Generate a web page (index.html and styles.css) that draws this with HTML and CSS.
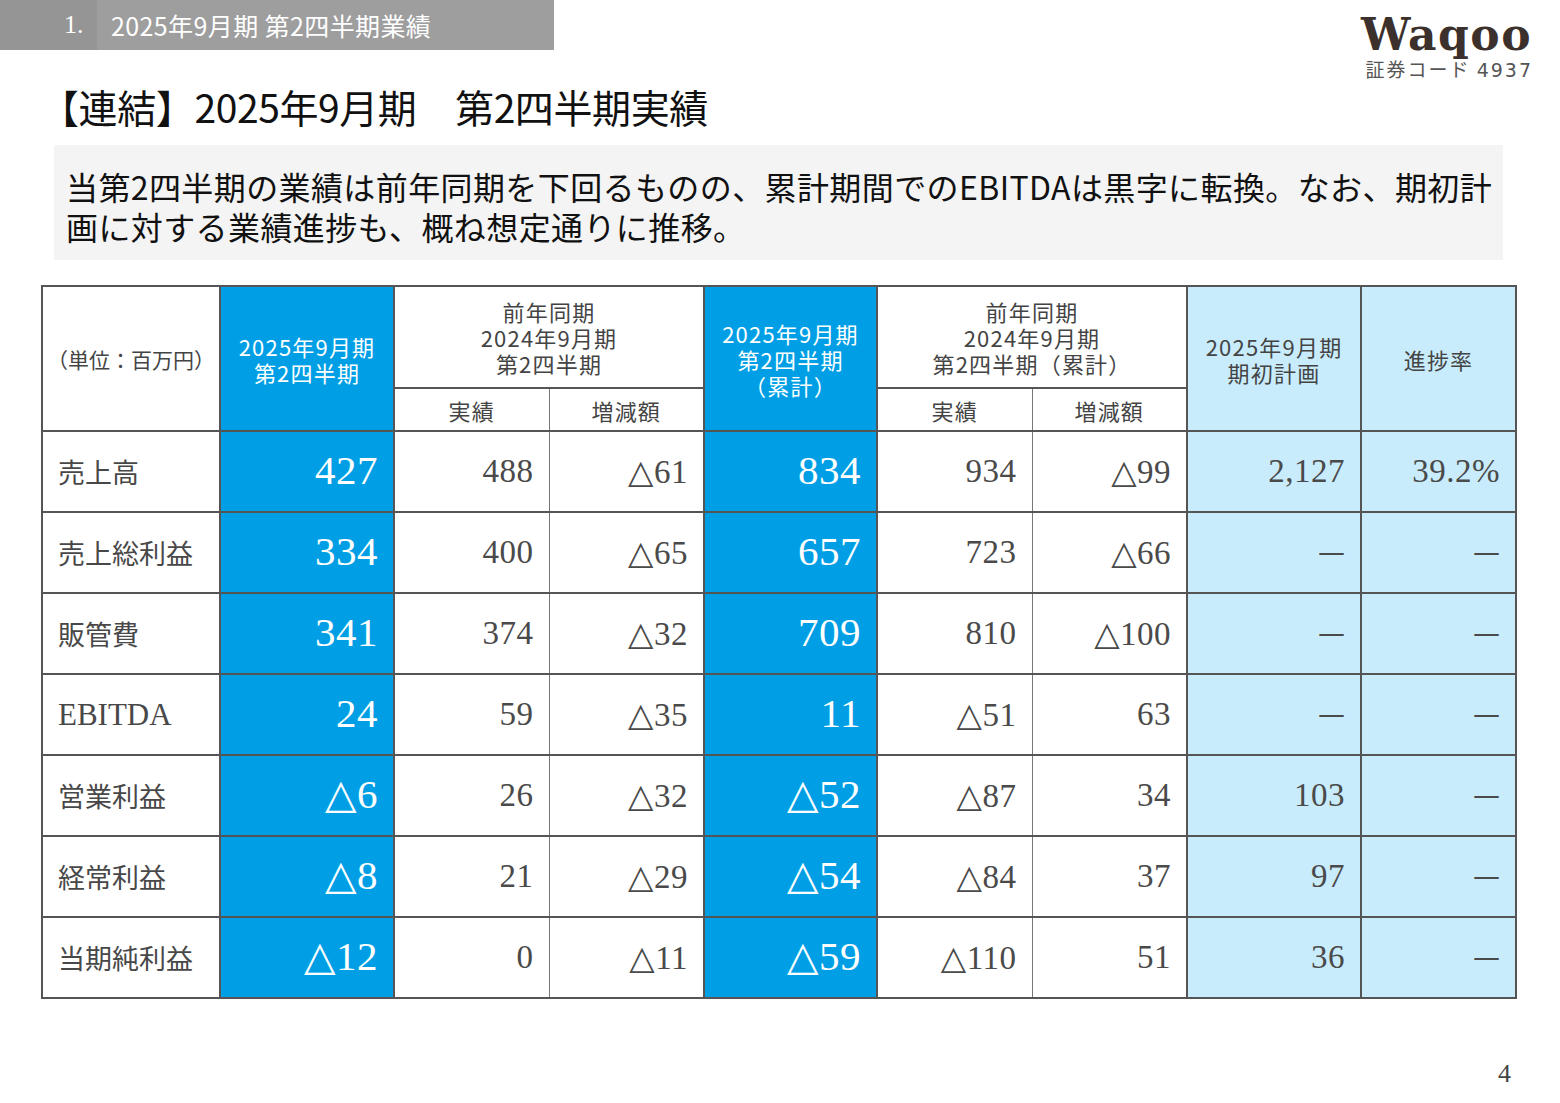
FILE: index.html
```html
<!DOCTYPE html>
<html lang="ja">
<head>
<meta charset="utf-8">
<title>【連結】2025年9月期 第2四半期実績</title>
<link rel="stylesheet" href="styles.css">
</head>
<body>
<div class="page">
  <header class="top">
    <div class="banner">
      <div class="banner-num">1.</div>
      <div class="banner-text">2025年9月期 第2四半期業績</div>
    </div>
    <div class="logo">
      <div class="logo-mark">Waqoo</div>
      <div class="logo-code">証券コード <span class="code-num">4937</span></div>
    </div>
  </header>
  <h1 class="title">【連結】2025年9月期　第2四半期実績</h1>
  <div class="summary">当第2四半期の業績は前年同期を下回るものの、累計期間でのEBITDAは黒字に転換。なお、期初計<br>画に対する業績進捗も、概ね想定通りに推移。</div>
  <table class="results">
    <colgroup>
      <col class="c-label"><col class="c-main"><col class="c-sub"><col class="c-sub"><col class="c-main2"><col class="c-sub"><col class="c-sub"><col class="c-main"><col class="c-sub">
    </colgroup>
    <thead>
      <tr class="h1">
        <th rowspan="2" class="unit">（単位：百万円）</th>
        <th rowspan="2" class="blue">2025年9月期<br>第2四半期</th>
        <th colspan="2">前年同期<br>2024年9月期<br>第2四半期</th>
        <th rowspan="2" class="blue">2025年9月期<br>第2四半期<br>（累計）</th>
        <th colspan="2">前年同期<br>2024年9月期<br>第2四半期（累計）</th>
        <th rowspan="2" class="light">2025年9月期<br>期初計画</th>
        <th rowspan="2" class="light">進捗率</th>
      </tr>
      <tr class="h2">
        <th class="thin-r">実績</th>
        <th class="thin-l">増減額</th>
        <th class="thin-r">実績</th>
        <th class="thin-l">増減額</th>
      </tr>
    </thead>
    <tbody>
      <tr>
        <td class="label">売上高</td>
        <td class="blue num big">427</td>
        <td class="num thin-r">488</td>
        <td class="num thin-l">△61</td>
        <td class="blue num big">834</td>
        <td class="num thin-r">934</td>
        <td class="num thin-l">△99</td>
        <td class="light num">2,127</td>
        <td class="light num">39.2%</td>
      </tr>
      <tr>
        <td class="label">売上総利益</td>
        <td class="blue num big">334</td>
        <td class="num thin-r">400</td>
        <td class="num thin-l">△65</td>
        <td class="blue num big">657</td>
        <td class="num thin-r">723</td>
        <td class="num thin-l">△66</td>
        <td class="light num"><span class="dash">—</span></td>
        <td class="light num"><span class="dash">—</span></td>
      </tr>
      <tr>
        <td class="label">販管費</td>
        <td class="blue num big">341</td>
        <td class="num thin-r">374</td>
        <td class="num thin-l">△32</td>
        <td class="blue num big">709</td>
        <td class="num thin-r">810</td>
        <td class="num thin-l">△100</td>
        <td class="light num"><span class="dash">—</span></td>
        <td class="light num"><span class="dash">—</span></td>
      </tr>
      <tr>
        <td class="label latin">EBITDA</td>
        <td class="blue num big">24</td>
        <td class="num thin-r">59</td>
        <td class="num thin-l">△35</td>
        <td class="blue num big">11</td>
        <td class="num thin-r">△51</td>
        <td class="num thin-l">63</td>
        <td class="light num"><span class="dash">—</span></td>
        <td class="light num"><span class="dash">—</span></td>
      </tr>
      <tr>
        <td class="label">営業利益</td>
        <td class="blue num big">△6</td>
        <td class="num thin-r">26</td>
        <td class="num thin-l">△32</td>
        <td class="blue num big">△52</td>
        <td class="num thin-r">△87</td>
        <td class="num thin-l">34</td>
        <td class="light num">103</td>
        <td class="light num"><span class="dash">—</span></td>
      </tr>
      <tr>
        <td class="label">経常利益</td>
        <td class="blue num big">△8</td>
        <td class="num thin-r">21</td>
        <td class="num thin-l">△29</td>
        <td class="blue num big">△54</td>
        <td class="num thin-r">△84</td>
        <td class="num thin-l">37</td>
        <td class="light num">97</td>
        <td class="light num"><span class="dash">—</span></td>
      </tr>
      <tr>
        <td class="label">当期純利益</td>
        <td class="blue num big">△12</td>
        <td class="num thin-r">0</td>
        <td class="num thin-l">△11</td>
        <td class="blue num big">△59</td>
        <td class="num thin-r">△110</td>
        <td class="num thin-l">51</td>
        <td class="light num">36</td>
        <td class="light num"><span class="dash">—</span></td>
      </tr>
    </tbody>
  </table>
  <footer class="foot">
    <span class="page-no">4</span>
  </footer>
</div>
</body>
</html>
```

FILE: styles.css
```css
* { box-sizing: border-box; }
html, body { margin: 0; padding: 0; background: #ffffff; }
body {
  width: 1560px;
  height: 1103px;
  overflow: hidden;
  font-family: "Noto Sans CJK JP", "Noto Sans", sans-serif;
  color: #444444;
}
.page { width: 1560px; }

.top {
  display: flex;
  justify-content: space-between;
  align-items: flex-start;
  height: 80px;
}
.banner {
  display: flex;
  width: 554px;
  height: 50px;
  background: #9e9e9e;
  color: #ffffff;
}
.banner-num {
  width: 97px;
  background: #959595;
  font-family: "Liberation Serif", serif;
  font-size: 26px;
  line-height: 50px;
  padding-left: 64px;
}
.banner-text {
  padding-left: 14px;
  font-size: 25px;
  line-height: 50px;
  letter-spacing: 0.4px;
}
.logo {
  display: flex;
  flex-direction: column;
  align-items: flex-end;
  padding-top: 12px;
  padding-right: 29px;
}
.logo-mark {
  font-family: "DejaVu Serif", serif;
  font-weight: bold;
  font-size: 44px;
  line-height: 46px;
  color: #3b302b;
  letter-spacing: 1.5px;
  margin-right: -1px;
}
.logo-code {
  font-size: 19px;
  line-height: 22px;
  color: #555555;
  letter-spacing: 2px;
  margin-right: -2px;
}
.code-num {
  font-family: "DejaVu Sans", sans-serif;
  font-size: 19px;
  letter-spacing: 2px;
}

.title {
  margin: 4px 0 0 40px;
  font-weight: normal;
  font-size: 39px;
  line-height: 44px;
  color: #111111;
  letter-spacing: -0.4px;
}

.summary {
  margin: 17px 0 0 54px;
  width: 1449px;
  height: 115px;
  background: #f4f4f4;
  padding: 21px 0 0 12px;
  font-size: 32px;
  line-height: 40px;
  color: #111111;
  letter-spacing: 0.4px;
  white-space: nowrap;
}

.results {
  margin: 25px 0 0 41px;
  width: 1474px;
  border-collapse: collapse;
  table-layout: fixed;
}
.c-label { width: 178px; }
.c-main { width: 174px; }
.c-main2 { width: 173px; }
.c-sub { width: 155px; }

.results th, .results td {
  border: 2px solid #555555;
  padding: 0;
}
.results th {
  font-weight: normal;
  font-size: 22px;
  line-height: 26px;
  color: #444444;
  text-align: center;
  vertical-align: middle;
  letter-spacing: 1.2px;
}
.results .h1 { height: 102px; }
.results .h2 { height: 43px; }
.results th.unit { font-size: 21px; letter-spacing: 0; }

.results .thin-r { border-right: 1px solid #777777; }
.results .thin-l { border-left: 1px solid #777777; }

.results .blue { background: #009fe5; color: #ffffff; }
.results .light { background: #c9ecfc; }

.results tbody tr { height: 81px; }
.results td.label {
  padding-left: 15px;
  font-size: 27px;
  color: #484848;
  text-align: left;
}
.results td.latin {
  font-family: "Liberation Serif", "Noto Sans CJK JP", serif;
  font-size: 31px;
}
.results td.num {
  font-family: "Liberation Serif", "DejaVu Serif", "Noto Sans CJK JP", serif;
  font-size: 33px;
  text-align: right;
  padding-right: 15px;
  color: #4a4a4a;
  letter-spacing: 0.5px;
}
.results td.blue.num { color: #ffffff; }
.results td.big {
  font-size: 41px;
  padding-bottom: 3px;
}
.dash {
  display: inline-block;
  font-size: 24px;
  transform: scaleY(1.6) translateY(-3px);
  padding-right: 1px;
}

.foot {
  display: flex;
  justify-content: flex-end;
  padding-right: 49px;
  margin-top: 60px;
}
.page-no {
  font-family: "Liberation Serif", serif;
  font-size: 26px;
  line-height: 30px;
  color: #444444;
}
```
